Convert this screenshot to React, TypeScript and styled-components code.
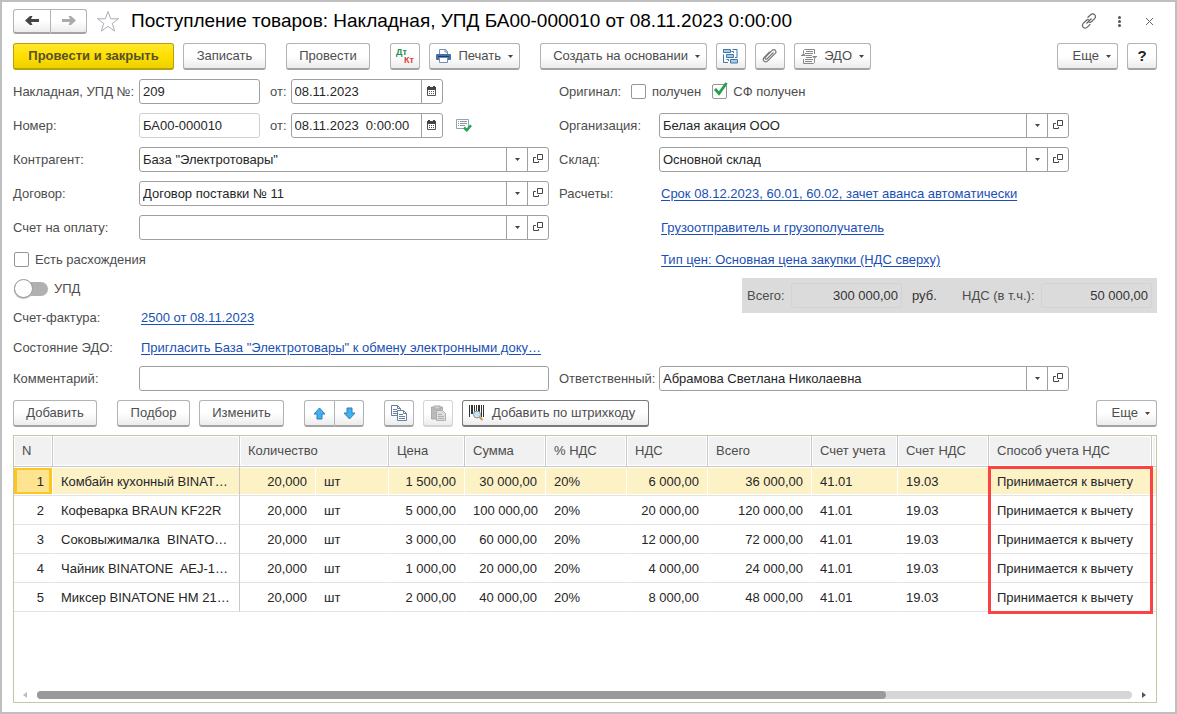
import React from "react";
import styled, { createGlobalStyle } from "styled-components";

const GlobalStyle = createGlobalStyle`
  *, *::before, *::after { box-sizing: border-box; }
  html, body, #root { height: 100%; }
  body {
    margin: 0;
    background: #fff;
    color: #4d4d4d;
    font: 13px/16px "Liberation Sans", Arial, sans-serif;
  }
  button, input { font: inherit; color: inherit; }
`;

/* ---------- window ---------- */

const Window = styled.main`
  display: flex;
  flex-direction: column;
  min-height: 100%;
  min-width: 960px;
  padding: 7px 18px 9px 11px;
  border: 2px solid #bfbfbf;
  background: #fff;
`;

const TitleBar = styled.header`
  display: flex;
  align-items: center;
  height: 24px;
  margin-right: -7px;
`;

const Title = styled.h1`
  flex: 1;
  margin: 0 0 0 8px;
  color: #000;
  font-size: 19px;
  font-weight: 400;
  line-height: 24px;
  white-space: nowrap;
`;

const ButtonPair = styled.div`
  display: flex;
  & > button:first-child { border-radius: 3px 0 0 3px; }
  & > button:last-child { border-radius: 0 3px 3px 0; border-left: 0; }
`;

const IconButton = styled.button<{ $spaced?: boolean }>`
  display: flex;
  align-items: center;
  justify-content: center;
  width: 30px;
  height: 24px;
  margin: 0 0 0 ${(p) => (p.$spaced ? 6 : 0)}px;
  padding: 0;
  border: 0;
  background: none;
  color: #555;
`;

/* ---------- command bars ---------- */

const CommandBar = styled.div<{ $top: number }>`
  display: flex;
  gap: 9px;
  height: 27px;
  margin-top: ${(p) => p.$top}px;
`;

const CommandGroup = styled.div`
  display: flex;
  gap: 9px;
  margin-right: 11px;
`;

const Spacer = styled.div`
  flex: 1;
`;

type Tone = "plain" | "primary" | "strong" | "disabled";

const edge: Record<Tone, string> = {
  plain: "#b3b3b3",
  primary: "#b8a100",
  strong: "#7a7a7a",
  disabled: "#d4d4d4",
};

const Command = styled.button<{
  $width: number;
  $tone?: Tone;
  $height?: number;
  $align?: "center" | "flex-start" | "flex-end";
}>`
  display: flex;
  flex: none;
  align-items: center;
  justify-content: ${(p) => p.$align ?? "center"};
  gap: 7px;
  width: ${(p) => p.$width}px;
  height: ${(p) => p.$height ?? 27}px;
  padding: 0 ${(p) => (p.$align ? 6 : 0)}px;
  border: 1px solid ${(p) => edge[p.$tone ?? "plain"]};
  border-bottom: 2px solid ${(p) => (p.$tone ? edge[p.$tone] : "#a3a3a3")};
  border-radius: 3px;
  background: ${(p) =>
    p.$tone === "primary"
      ? "linear-gradient(#ffe72e, #ffe000 50%, #ecd000)"
      : "linear-gradient(#fff 50%, #ececec)"};
  color: ${(p) => (p.$tone === "primary" ? "#57502a" : "#4d4d4d")};
  font-weight: ${(p) => (p.$tone === "primary" ? 700 : 400)};
  white-space: nowrap;
`;

const Help = styled.b`
  color: #222;
  font-size: 15px;
`;

const CaretSvg = styled.svg`
  flex: none;
`;

const Caret = () => (
  <CaretSvg width="5" height="3" viewBox="0 0 5 3" aria-hidden="true">
    <path d="M0 0h5L2.5 3z" fill="#444" />
  </CaretSvg>
);

/* ---------- form ---------- */

const FormGrid = styled.div<{ $top: number }>`
  display: grid;
  grid-template-columns: minmax(0, 536fr) minmax(0, 598fr);
  column-gap: 10px;
  margin-top: ${(p) => p.$top}px;
`;

const Column = styled.div`
  min-width: 0;
`;

const Fields = styled.div`
  display: flex;
  flex-direction: column;
  gap: 9px;
`;

const Notes = styled.div`
  margin-top: 5px;
`;

const Row = styled.div<{ $height?: number }>`
  display: flex;
  align-items: center;
  height: ${(p) => p.$height ?? 25}px;
`;

const Label = styled.label<{ $width: number }>`
  flex: none;
  width: ${(p) => p.$width}px;
  white-space: nowrap;
`;

const Caption = styled.span<{ $width: number }>`
  flex: none;
  width: ${(p) => p.$width}px;
  white-space: nowrap;
`;

const Short = styled.label`
  margin: 0 4px 0 10px;
`;

const Box = styled.div<{ $width?: number; $readOnly?: boolean }>`
  display: flex;
  flex: ${(p) => (p.$width ? "none" : "1")};
  width: ${(p) => (p.$width ? p.$width + "px" : "auto")};
  max-width: 410px;
  min-width: 0;
  height: 25px;
  border: 1px solid ${(p) => (p.$readOnly ? "#d0d0d0" : "#a0a0a0")};
  border-radius: 3px;
  background: #fff;
  overflow: hidden;
`;

const TextInput = styled.input`
  flex: 1;
  min-width: 0;
  padding: 0 3px;
  border: 0;
  outline: 0;
  background: none;
  color: #262626;
`;

const BoxButton = styled.button`
  display: flex;
  flex: none;
  align-items: center;
  justify-content: center;
  width: 21px;
  padding: 0;
  border: 0;
  border-left: 1px solid #a0a0a0;
  background: none;
`;

const LinkText = styled.a`
  margin-left: 2px;
  color: #1a4fb5;
  text-decoration: underline;
  text-underline-offset: 2px;
  white-space: nowrap;
`;

const CheckLabel = styled.label`
  display: flex;
  align-items: center;
  gap: 6px;
  margin-left: 1px;
  margin-right: 10px;
`;

const CheckHolder = styled.span`
  position: relative;
  display: flex;
  & > svg { position: absolute; left: 1px; top: -2px; pointer-events: none; }
`;

const CheckInput = styled.input`
  appearance: none;
  width: 15px;
  height: 15px;
  margin: 0;
  border: 1px solid #969696;
  border-radius: 2px;
  background: #fff;
`;

const Switch = styled.input`
  appearance: none;
  position: relative;
  width: 34px;
  height: 14px;
  margin: 0;
  border-radius: 7px;
  background: #b0b0b0;
  &::before {
    content: "";
    position: absolute;
    left: 0;
    top: -3px;
    width: 19px;
    height: 19px;
    border: 1px solid #999;
    border-radius: 50%;
    background: #fff;
    box-shadow: 0 1px 1px #bbb;
  }
`;

const Totals = styled.div`
  display: flex;
  align-items: center;
  width: 415px;
  height: 35px;
  margin: 4px 0 0 auto;
  padding: 0 5px;
  background: #dbdbdb;
`;

const TotalLabel = styled.label<{ $width: number }>`
  width: ${(p) => p.$width}px;
  white-space: nowrap;
`;

const TotalInput = styled.input`
  width: 111px;
  height: 25px;
  padding: 0 3px;
  border: 1px solid #d3d3d3;
  border-radius: 3px;
  background: none;
  color: #333;
  text-align: right;
`;

const Currency = styled.span`
  width: 60px;
  padding-left: 10px;
  color: #333;
`;

/* ---------- goods table ---------- */

const GridPanel = styled.section`
  position: relative;
  display: flex;
  flex: 1;
  flex-direction: column;
  justify-content: space-between;
  margin-top: 8px;
  border: 1px solid #c9c4a2;
  overflow: hidden;
`;

const Table = styled.table`
  width: 100%;
  min-width: 1142px;
  table-layout: fixed;
  border-collapse: separate;
  border-spacing: 0;
  color: #262626;
`;

const Col = styled.col<{ $width?: number }>`
  width: ${(p) => (p.$width ? p.$width + "px" : "auto")};
`;

const HeadCell = styled.th`
  height: 31px;
  padding: 0 8px;
  border-right: 1px solid #c8c8c8;
  border-bottom: 1px solid #c8c8c8;
  background: #f1f1f1;
  box-shadow: inset 0 0 0 1px #fff;
  color: #4d4d4d;
  font-weight: 400;
  text-align: left;
  white-space: nowrap;
  &:last-child { padding: 0; border-right: 0; }
`;

const Line = styled.tr<{ $selected: boolean }>`
  & > td {
    background: ${(p) => (p.$selected ? "#fdf1c6" : "#fff")};
  }
`;

const Cell = styled.td<{ $right?: boolean; $divider?: boolean }>`
  height: 29px;
  padding: 2px 8px 0;
  border-right: 1px solid ${(p) => (p.$divider ? "#c8c8c8" : "#fff")};
  border-bottom: 1px solid #e2e2e2;
  box-shadow: inset 0 1px #fff, inset 0 -1px #fff;
  text-align: ${(p) => (p.$right ? "right" : "left")};
  white-space: pre;
  &:last-child { padding: 0; border-right: 0; }
`;

const NumberCell = styled(Cell)<{ $current: boolean }>`
  ${(p) =>
    p.$current &&
    `&& {
      background: #fee391;
      box-shadow: inset 0 1px #fff, inset 0 -1px #fff, inset 0 0 0 3px #fcc521;
    }`}
`;

const Highlight = styled.div`
  position: absolute;
  left: 974px;
  top: 30px;
  width: 165px;
  height: 148px;
  border: 3px solid #fb4244;
  pointer-events: none;
`;

const ScrollBar = styled.div`
  display: flex;
  align-items: center;
  gap: 9px;
  height: 15px;
  padding: 0 9px 0 8px;
`;

const ScrollTrack = styled.div`
  flex: 1;
  height: 8px;
  border-radius: 4px;
  background: #d6d6d6;
`;

const ScrollThumb = styled.div`
  width: 77.5%;
  height: 8px;
  border-radius: 4px;
  background: #999;
`;

/* ---------- icons ---------- */

const OpenIcon = () => (
  <svg width="11" height="11" viewBox="0 0 11 11" fill="none" stroke="#444" aria-hidden="true">
    <path d="M4.5.5h5v5h-5zM2.900 3.500H.5v5h5V7" />
  </svg>
);

const CalendarIcon = () => (
  <svg width="11" height="11" viewBox="0 0 11 11" aria-hidden="true">
    <path d="M1.500 2h8v7.500h-8z" fill="#fff" stroke="#555" />
    <path d="M1 1h9v3H1zM2 0h2v2H2zM7 0h2v2H7z" fill="#444" />
    <path d="M3 5.500h6M3 7.500h6" stroke="#555" strokeDasharray="1 1" />
  </svg>
);

const ArrowIcon = ({ right }: { right?: boolean }) => (
  <svg width="14" height="11" viewBox="0 0 14 11" aria-hidden="true">
    <path
      d={right ? "M0 4h8L6.500 1H9l5 4.500L9 10H6.500L8 7H0z" : "M14 4H6l1.500-3H5L0 5.500 5 10h2.500L6 7h8z"}
      fill={right ? "#aaa" : "#444"}
    />
  </svg>
);

const StarIcon = () => (
  <svg width="24" height="23" viewBox="0 0 24 23" fill="none" stroke="#aab0b5" aria-hidden="true">
    <path d="M12 1.5l2.7 7.3h7.8l-6.2 4.6 2.3 7.6-6.6-4.6L5.4 21l2.3-7.6L1.5 8.8h7.8z" />
  </svg>
);

const LinkIcon = () => (
  <svg width="16" height="16" viewBox="0 0 16 16" fill="none" stroke="#666" strokeWidth="1.2" aria-hidden="true">
    <path d="M6.5 4.7L9.6 1.7c1.2-1.2 3-1.2 4 0s1 2.800 0 3.900l-2.900 2.900c-.8.8-2 1-3 .5" />
    <path d="M9.3 11.1l-3 3.1c-1.2 1.2-3 1.2-4 .1s-1.100-2.800 0-3.900l2.900-2.900c.8-.8 2-1 3-.5" />
    <path d="M5.5 10.5l5-5" />
  </svg>
);

const DotsIcon = () => (
  <svg width="3" height="11" viewBox="0 0 3 11" fill="#555" aria-hidden="true">
    <circle cx="1.5" cy="1.5" r="1.5" />
    <circle cx="1.5" cy="5.5" r="1.5" />
    <circle cx="1.5" cy="9.5" r="1.5" />
  </svg>
);

const CloseIcon = () => (
  <svg width="9" height="9" viewBox="0 0 9 9" stroke="#666" aria-hidden="true">
    <path d="M1 1l7 7M8 1L1 8" />
  </svg>
);

const LedgerMark = styled.span`
  display: flex;
  flex-direction: column;
  width: 18px;
  font-size: 9px;
  font-weight: 700;
  line-height: 8px;
`;

const Debit = styled.span`
  color: #17934a;
  text-align: left;
`;

const Credit = styled.span`
  color: #e03a3a;
  text-align: right;
`;

const PrintIcon = () => (
  <svg width="15" height="14" viewBox="0 0 15 14" aria-hidden="true">
    <path d="M3.5 5V.5h6l2 2V5" fill="#fff" stroke="#6f8fb3" />
    <path d="M9 .5V3h2.5" fill="none" stroke="#6f8fb3" />
    <rect y="5" width="15" height="6" rx="1" fill="#4470a3" />
    <path d="M2 7.5h11" stroke="#1d3d68" />
    <path d="M3.5 8.500h8v5h-8z" fill="#fff" stroke="#6f8fb3" />
  </svg>
);

const StructureIcon = () => (
  <svg width="16" height="15" viewBox="0 0 16 15" fill="none" stroke="#3f78a8" aria-hidden="true">
    <path d="M.5.5h7v3h-7zM3.5 5.500h7v3h-7zM7.500 10.500h7v3.500h-7z" fill="#a9cbea" />
    <path d="M9.500.5h4.500v8M14 8.500h-2M.5 5.500v8h4.500M3.500 10.500h2v1.500M8.500 2.500h2v1.500" />
  </svg>
);

const ClipIcon = () => (
  <svg width="16" height="16" viewBox="0 0 16 16" fill="none" stroke="#777" strokeWidth="1.2" aria-hidden="true">
    <path d="M11.5 4.5l-6.300 6.200c-.6.6-1.5.6-1.9.1s-.4-1.2.2-1.8l6.400-6.400c1.100-1.100 2.500-1.200 3.400-.3s.8 2.300-.3 3.400l-7 7c-1.300 1.300-3 1.400-4 .4s-.9-2.700.4-4l5.400-5.400" />
  </svg>
);

const ExchangeIcon = () => (
  <svg width="16" height="15" viewBox="0 0 16 15" fill="none" stroke="#888" aria-hidden="true">
    <path d="M2.5 4V1.500l1-1h10V5M13.500 10v3.500l-1 1h-10V10M5 2.500h7M4 4.500h8M4 10.500h8M4 12.500h7M5 8.500h6M5 6.500h6" />
    <path d="M0 6.500h4M12 7.500h4" />
    <path d="M0 7L2.500 4 5 7zM11 7h5l-2.500 3z" fill="#888" stroke="none" />
  </svg>
);

const PostedIcon = () => (
  <svg width="16" height="13" viewBox="0 0 16 13" fill="none" aria-hidden="true">
    <path d="M.5.5h12v9H.5z" fill="#fff" stroke="#8fa5b0" />
    <path d="M2 2.5h1M4 2.5h7M2 4.5h1M4 4.5h7M2 6.5h1M4 6.5h5" stroke="#8796a0" />
    <path d="M8 8.5l2.8 2.8 4.2-5" stroke="#26a355" strokeWidth="2.5" />
  </svg>
);

const CheckMark = () => (
  <svg width="16" height="14" viewBox="0 0 16 14" fill="none" stroke="#26a04b" strokeWidth="2.8" aria-hidden="true">
    <path d="M2 7l4 4.5L13.5 1" />
  </svg>
);

const MoveIcon = ({ down }: { down?: boolean }) => (
  <svg width="13" height="13" viewBox="0 0 13 13" aria-hidden="true">
    <path
      d={down ? "M4 1h5v5h3L6.5 12 1 6h3z" : "M4 12h5V7h3L6.5 1 1 7h3z"}
      fill="#41b0f0"
      stroke="#2f7fb5"
    />
  </svg>
);

const CopyIcon = () => (
  <svg width="16" height="16" viewBox="0 0 16 16" fill="#fff" stroke="#6580a0" aria-hidden="true">
    <path d="M.5.5h6l3 3v7h-9zM6.5.5v3h3" />
    <path d="M2 4.5h4M2 6.5h4M2 8.5h4" />
    <path d="M6.5 5.5h6l3 3v7h-9zM12.5 5.5v3h3" />
    <path d="M8 9.5h4M8 11.5h6M8 13.5h6" />
  </svg>
);

const PasteIcon = () => (
  <svg width="15" height="16" viewBox="0 0 15 16" aria-hidden="true">
    <path d="M.5 2h11v12H.5z" fill="#bbb" stroke="#aaa" />
    <path d="M3 1h6v3H3z" fill="#d9d0c4" stroke="#aaa" />
    <path d="M5.5 5.5h6l3 3v7h-9z" fill="#ddd" stroke="#aab0b5" />
    <path d="M7 9.5h4M7 11.5h6M7 13.5h6" stroke="#aab0b5" />
  </svg>
);

const BarcodeIcon = () => (
  <svg width="16" height="16" viewBox="0 0 16 16" aria-hidden="true">
    <path
      d="M0 0h1v12H0zM2 0h2v9H2zM5 0h1v9H5zM7 0h1v9H7zM9 0h2v9H9zM12 0h1v12h-1zM14 0h1v12h-1z"
      fill="#333"
    />
    <circle cx="8" cy="9.5" r="3.5" fill="#c9e2f2" stroke="#8a9aa5" />
    <path d="M10.5 12l3 3" stroke="#c99a52" strokeWidth="2" />
  </svg>
);

const ScrollArrow = ({ right }: { right?: boolean }) => (
  <svg width="6" height="6" viewBox="0 0 6 6" aria-hidden="true">
    <path d={right ? "M1 0l4 3-4 3z" : "M5 0L1 3l4 3z"} fill={right ? "#555" : "#bbb"} />
  </svg>
);

/* ---------- composed fields ---------- */

const LookupBox = ({ id, value }: { id: string; value: string }) => (
  <Box>
    <TextInput id={id} defaultValue={value} />
    <BoxButton type="button" aria-label="Выбрать"><Caret /></BoxButton>
    <BoxButton type="button" aria-label="Открыть"><OpenIcon /></BoxButton>
  </Box>
);

const DateBox = ({ id, value }: { id: string; value: string }) => (
  <Box $width={152}>
    <TextInput id={id} defaultValue={value} />
    <BoxButton type="button" aria-label="Календарь"><CalendarIcon /></BoxButton>
  </Box>
);

const Lookup = ({ id, label, value, width }: { id: string; label: string; value: string; width: number }) => (
  <Row>
    <Label htmlFor={id} $width={width}>{label}</Label>
    <LookupBox id={id} value={value} />
  </Row>
);

const CheckBox = ({ label, checked }: { label: string; checked?: boolean }) => (
  <CheckLabel>
    <CheckHolder>
      <CheckInput type="checkbox" defaultChecked={checked} />
      {checked && <CheckMark />}
    </CheckHolder>
    {label}
  </CheckLabel>
);

/* ---------- data ---------- */

const columnWidths = [39, 187, 76, 73, 76, 81, 81, 81, 104, 86, 91, 163];

const goods = [
  ["Комбайн кухонный BINAT…", "1 500,00", "30 000,00", "6 000,00", "36 000,00"],
  ["Кофеварка BRAUN KF22R", "5 000,00", "100 000,00", "20 000,00", "120 000,00"],
  ["Соковыжималка  BINATO…", "3 000,00", "60 000,00", "12 000,00", "72 000,00"],
  ["Чайник BINATONE  AEJ-1…", "1 000,00", "20 000,00", "4 000,00", "24 000,00"],
  ["Миксер BINATONE HM 21…", "2 000,00", "40 000,00", "8 000,00", "48 000,00"],
];

export default function App() {
  return (
    <>
      <GlobalStyle />
      <Window>
        <TitleBar>
          <ButtonPair>
            <Command type="button" $width={38} $height={25} aria-label="Назад"><ArrowIcon /></Command>
            <Command type="button" $width={36} $height={25} aria-label="Вперед"><ArrowIcon right /></Command>
          </ButtonPair>
          <IconButton type="button" $spaced aria-label="В избранное"><StarIcon /></IconButton>
          <Title>Поступление товаров: Накладная, УПД БА00-000010 от 08.11.2023 0:00:00</Title>
          <IconButton type="button" aria-label="Ссылка"><LinkIcon /></IconButton>
          <IconButton type="button" aria-label="Меню"><DotsIcon /></IconButton>
          <IconButton type="button" aria-label="Закрыть"><CloseIcon /></IconButton>
        </TitleBar>

        <CommandBar $top={10}>
          <CommandGroup>
            <Command type="button" $width={161} $tone="primary">Провести и закрыть</Command>
            <Command type="button" $width={83}>Записать</Command>
          </CommandGroup>
          <CommandGroup>
            <Command type="button" $width={84}>Провести</Command>
          </CommandGroup>
          <CommandGroup>
            <Command type="button" $width={30} aria-label="Движения документа">
              <LedgerMark><Debit>Дт</Debit><Credit>Кт</Credit></LedgerMark>
            </Command>
            <Command type="button" $width={91} $align="flex-end"><PrintIcon />Печать<Caret /></Command>
          </CommandGroup>
          <Command type="button" $width={167} $align="flex-end">Создать на основании<Caret /></Command>
          <Command type="button" $width={30} aria-label="Структура подчиненности"><StructureIcon /></Command>
          <Command type="button" $width={30} aria-label="Файлы"><ClipIcon /></Command>
          <Command type="button" $width={77} $align="flex-end"><ExchangeIcon />ЭДО<Caret /></Command>
          <Spacer />
          <Command type="button" $width={61} $align="flex-end">Еще<Caret /></Command>
          <Command type="button" $width={30} aria-label="Справка"><Help>?</Help></Command>
        </CommandBar>

        <FormGrid $top={9}>
          <Column>
            <Fields>
              <Row>
                <Label htmlFor="invoice" $width={126}>Накладная, УПД №:</Label>
                <Box $width={121}><TextInput id="invoice" defaultValue="209" /></Box>
                <Short htmlFor="invoiceDate">от:</Short>
                <DateBox id="invoiceDate" value="08.11.2023" />
              </Row>
              <Row>
                <Label htmlFor="number" $width={126}>Номер:</Label>
                <Box $width={121} $readOnly><TextInput id="number" defaultValue="БА00-000010" readOnly /></Box>
                <Short htmlFor="numberDate">от:</Short>
                <DateBox id="numberDate" value="08.11.2023  0:00:00" />
                <IconButton type="button" $spaced aria-label="Проведен"><PostedIcon /></IconButton>
              </Row>
              <Lookup id="partner" label="Контрагент:" value={'База "Электротовары"'} width={126} />
              <Lookup id="contract" label="Договор:" value="Договор поставки № 11" width={126} />
              <Lookup id="bill" label="Счет на оплату:" value="" width={126} />
            </Fields>
            <Notes>
              <Row $height={29}><CheckBox label="Есть расхождения" /></Row>
              <Row $height={29}>
                <CheckLabel><Switch type="checkbox" role="switch" />УПД</CheckLabel>
              </Row>
              <Row $height={30}>
                <Caption $width={126}>Счет-фактура:</Caption>
                <LinkText href="#invoice">2500 от 08.11.2023</LinkText>
              </Row>
              <Row $height={29}>
                <Caption $width={126}>Состояние ЭДО:</Caption>
                <LinkText href="#edo">Пригласить База "Электротовары" к обмену электронными доку…</LinkText>
              </Row>
            </Notes>
          </Column>
          <Column>
            <Fields>
              <Row>
                <Caption $width={71}>Оригинал:</Caption>
                <CheckBox label="получен" />
                <CheckBox label="СФ получен" checked />
              </Row>
              <Lookup id="company" label="Организация:" value="Белая акация ООО" width={100} />
              <Lookup id="store" label="Склад:" value="Основной склад" width={100} />
              <Row>
                <Caption $width={100}>Расчеты:</Caption>
                <LinkText href="#terms">Срок 08.12.2023, 60.01, 60.02, зачет аванса автоматически</LinkText>
              </Row>
              <Row>
                <Caption $width={100} />
                <LinkText href="#shipper">Грузоотправитель и грузополучатель</LinkText>
              </Row>
            </Fields>
            <Notes>
              <Row $height={29}>
                <Caption $width={100} />
                <LinkText href="#prices">Тип цен: Основная цена закупки (НДС сверху)</LinkText>
              </Row>
              <Totals>
                <TotalLabel htmlFor="total" $width={44}>Всего:</TotalLabel>
                <TotalInput id="total" defaultValue="300 000,00" readOnly />
                <Currency>руб.</Currency>
                <TotalLabel htmlFor="vat" $width={79}>НДС (в т.ч.):</TotalLabel>
                <TotalInput id="vat" defaultValue="50 000,00" readOnly />
              </Totals>
            </Notes>
          </Column>
        </FormGrid>

        <FormGrid $top={4}>
          <Row>
            <Label htmlFor="comment" $width={126}>Комментарий:</Label>
            <Box><TextInput id="comment" /></Box>
          </Row>
          <Lookup id="manager" label="Ответственный:" value="Абрамова Светлана Николаевна" width={100} />
        </FormGrid>

        <CommandBar $top={9}>
          <CommandGroup>
            <Command type="button" $width={84}>Добавить</Command>
          </CommandGroup>
          <CommandGroup>
            <Command type="button" $width={73}>Подбор</Command>
            <Command type="button" $width={85}>Изменить</Command>
          </CommandGroup>
          <CommandGroup>
            <ButtonPair>
              <Command type="button" $width={31} aria-label="Вверх"><MoveIcon /></Command>
              <Command type="button" $width={29} aria-label="Вниз"><MoveIcon down /></Command>
            </ButtonPair>
          </CommandGroup>
          <Command type="button" $width={30} aria-label="Копировать"><CopyIcon /></Command>
          <Command type="button" $width={30} $tone="disabled" disabled aria-label="Вставить"><PasteIcon /></Command>
          <Command type="button" $width={187} $tone="strong" $align="flex-start">
            <BarcodeIcon />Добавить по штрихкоду
          </Command>
          <Spacer />
          <Command type="button" $width={61} $align="flex-end">Еще<Caret /></Command>
        </CommandBar>

        <GridPanel>
          <Table>
            <colgroup>
              {columnWidths.map((w, i) => <Col key={i} $width={w} />)}
              <Col />
            </colgroup>
            <thead>
              <tr>
                <HeadCell>N</HeadCell>
                <HeadCell />
                <HeadCell colSpan={2}>Количество</HeadCell>
                {["Цена", "Сумма", "% НДС", "НДС", "Всего", "Счет учета", "Счет НДС", "Способ учета НДС"].map((h) => (
                  <HeadCell key={h}>{h}</HeadCell>
                ))}
                <HeadCell />
              </tr>
            </thead>
            <tbody>
              {goods.map(([name, price, sum, vat, total], i) => (
                <Line key={name} $selected={i === 0}>
                  <NumberCell $right $current={i === 0}>{i + 1}</NumberCell>
                  <Cell $divider>{name}</Cell>
                  <Cell $right>20,000</Cell>
                  <Cell>шт</Cell>
                  <Cell $right>{price}</Cell>
                  <Cell $right>{sum}</Cell>
                  <Cell>20%</Cell>
                  <Cell $right>{vat}</Cell>
                  <Cell $right>{total}</Cell>
                  <Cell>41.01</Cell>
                  <Cell>19.03</Cell>
                  <Cell>Принимается к вычету</Cell>
                  <Cell />
                </Line>
              ))}
            </tbody>
          </Table>
          <Highlight />
          <ScrollBar>
            <ScrollArrow />
            <ScrollTrack><ScrollThumb /></ScrollTrack>
            <ScrollArrow right />
          </ScrollBar>
        </GridPanel>
      </Window>
    </>
  );
}
